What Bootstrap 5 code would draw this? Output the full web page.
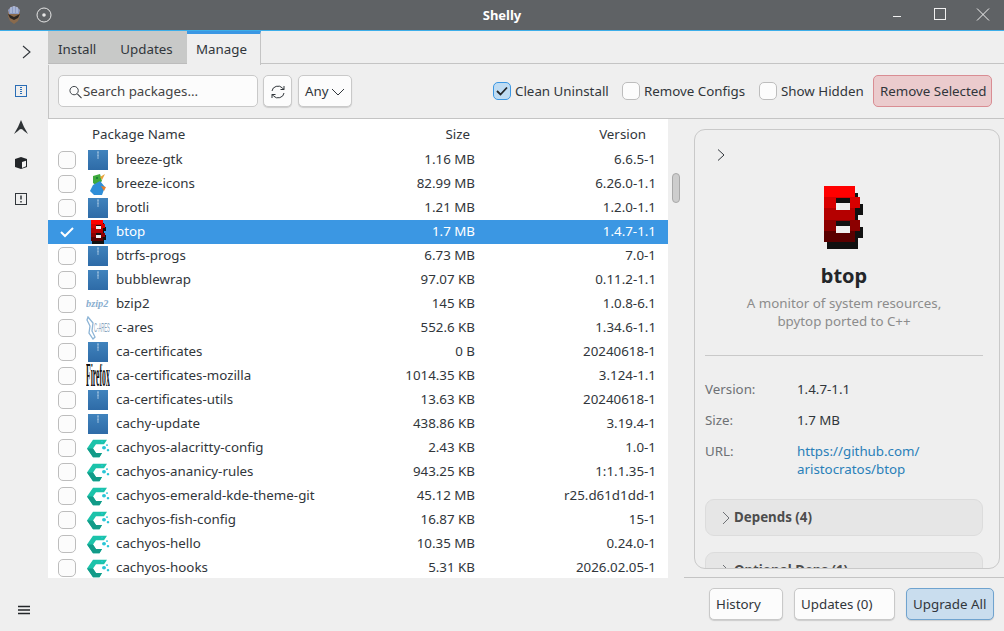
<!DOCTYPE html>
<html lang="en">
<head>
    <meta charset="UTF-8">
    <meta name="viewport" content="width=device-width, initial-scale=1.0">
    <title>Shelly</title>
    <link rel="stylesheet" href="https://cdn.jsdelivr.net/npm/bootstrap@5.3.0/dist/css/bootstrap.min.css">
    <style>
        html, body { height: 100%; overflow: hidden; }
        body { font-family: "Noto Sans", sans-serif; font-size: 13.33px; color: #31363b; background: #efefef; }
        .app-shell { width: 1004px; height: 631px; }
        .title-strip { height: 31px; background: #5f6265; border-bottom: 1px solid #3daee9; color: #fff; padding: 0 11px 0 7px; flex: none; }
        .title-text { font-weight: 700; font-size: 13px; left: 0; right: 0; top: 6px; text-align: center; }
        .title-disc { margin-left: 15px; }
        .win-btn { width: 20px; height: 20px; margin-left: 25px; }
        .win-btn + .win-btn { margin-left: 23px; }
        .main-area { height: 600px; }
        .side-rail { width: 48px; flex: none; padding-top: 11px; padding-bottom: 11px; }
        .rail-btn { width: 36px; height: 36px; margin-left: 3px; }
        .rail-chevron { margin-left: 6px; height: 20px; margin-bottom: 11px; }
        .rail-menu { margin-bottom: 5px; }
        .tab-strip { height: 34px; flex: none; }
        .tab-group { width: 139px; height: 33px; background: #c8c9c8; border-bottom: 1px solid #bcbcbc; padding: 9px 0 0 10px; gap: 24px; }
        .tab-on { width: 74px; height: 34px; border-top: 3px solid #3b97e3; border-right: 1px solid #c4c4c4; padding: 6px 0 0 9px; }
        .tab-rest { border-bottom: 1px solid #c4c4c4; height: 33px; }
        .tool-row { height: 54px; flex: none; position: relative; border-bottom: 1px solid #c4c4c4; border-left: 1px solid #c4c4c4; padding: 10px 12px 0 9px; }
        .field-box { height: 32px; background: #fcfcfc; border: 1px solid #c9c9c9; border-radius: 5px; padding-top: 1px; }
        .search-box { width: 200px; padding-left: 10px; color: #444; gap: 1px; }
        .refresh-btn { width: 29px; margin-left: 5px; box-shadow: 0 1px 1px #ccc; }
        .any-btn { width: 54px; margin-left: 6px; padding-left: 6px; gap: 2px; box-shadow: 0 1px 1px #ccc; }
        .fake-check { width: 18px; height: 18px; flex: none; background: #fcfcfc; border: 1px solid #bdbdbd; border-radius: 5px; }
        .fake-check.is-on { background: #bfdcf3; border-color: #3b97e3; }
        .opt-check { gap: 4px; position: absolute; top: 17px; }
        .opt-clean { left: 444px; }
        .opt-configs { left: 573px; }
        .opt-hidden { left: 710px; }
        .danger-btn { position: absolute; left: 824px; top: 10px; width: 119px; height: 32px; background: #ebcbcd; border: 1px solid #d98d93; border-radius: 5px; padding: 6px 0 0 6px; white-space: nowrap; }
        .split-area { height: 459px; flex: none; }
        .list-pane { width: 620px; flex: none; background: #fff; height: 459px; overflow: hidden; }
        .list-head { height: 29px; padding-top: 6px; }
        .pkg-row { height: 24px; align-items: center; }
        .pkg-row.is-sel { background: #3b97e3; color: #fff; }
        .cell-check { width: 38px; padding-left: 10px; flex: none; }
        .cell-icon { width: 30px; flex: none; padding-right: 6px; display: flex; justify-content: center; }
        .cell-name { width: 200px; flex: none; white-space: nowrap; }
        .cell-size { width: 159px; flex: none; text-align: right; }
        .cell-ver { width: 181px; flex: none; text-align: right; }
        .head-name { padding-left: 44px; width: 200px; }
        .head-size { width: 222px; text-align: right; }
        .head-ver { width: 176px; text-align: right; }
        .scroll-col { width: 26px; flex: none; padding: 54px 0 0 4px; }
        .scroll-thumb { width: 8px; height: 30px; background: #cdcdcd; border: 1px solid #a9a9a9; border-radius: 4px; }
        .detail-card { margin-top: 10px; width: 306px; height: 440px; border: 1px solid #c9c9c9; border-radius: 11px; overflow: hidden; padding: 0 16px 0 10px; }
        .detail-card > * { flex-shrink: 0; }
        .detail-chevron { height: 52px; padding: 15px 0 0 11px; }
        .detail-logo { display: block; margin: 4px auto 0; }
        .detail-name { font-size: 20px; font-weight: 700; color: #232629; line-height: 24px; margin-top: 14px; }
        .detail-desc { color: #8c8c8c; line-height: 18px; margin-top: 6px; height: 62px; border-bottom: 1px solid #c9c9c9; }
        .info-list { padding-top: 24px; line-height: 18px; }
        .info-row { height: 31px; }
        .info-url { height: 57px; }
        .info-key { width: 92px; color: #6e7175; flex: none; }
        .info-link { color: #2980b9; line-height: 18px; text-decoration: none; }
        .expander-box { height: 37px; background: #e6e6e6; border: 1px solid #dcdcdc; border-radius: 9px; margin-bottom: 16px; padding: 8px 0 0 16px; font-weight: 700; color: #4d4d4d; gap: 3px; }
        .expander-box svg { margin-top: 3px; }
        .foot-bar { height: 54px; flex: none; margin: -1px 0 0 636px; border-top: 1px solid #c4c4c4; padding: 10px 10px 0 25px; gap: 11px; }
        .foot-btn { height: 32px; background: #fcfcfc; border: 1px solid #c9c9c9; border-radius: 5px; padding: 6px 0 0 6px; box-shadow: 0 1px 1px #ccc; white-space: nowrap; }
        .foot-history { width: 74px; }
        .foot-updates { width: 101px; }
        .foot-primary { width: 88px; background: #c9ddee; border-color: #6fa3cf; }
    </style>
</head>
<body>
<svg width="0" height="0" class="position-absolute">
    <defs>
        <linearGradient id="zipFill" x1="0" y1="0" x2="0" y2="1"><stop offset="0" stop-color="#4083bd"/><stop offset="1" stop-color="#2e6ba7"/></linearGradient>
        <symbol id="zipIcon" viewBox="0 0 20 20">
            <rect x="0" y="0" width="20" height="20" fill="url(#zipFill)"/>
            <path d="M10 1v2M9 3h2M10 4v2M9 6h2M10 7v2" stroke="#9dc0de" stroke-width="1" fill="none"/>
        </symbol>
        <symbol id="cachyIcon" viewBox="0 0 24 24" preserveAspectRatio="none">
            <path d="M7 2h14l-3 5H10L7 12l3 5h6l-2.500 5H7L1 12z" fill="#1cc3aa"/>
            <path d="M1 12h6l3 5h6l-2.500 5H7z" fill="#129b88"/>
            <circle cx="18" cy="11" r="2" fill="#28c5d6"/><circle cx="22" cy="14" r="1.300" fill="#28c5d6"/><circle cx="16" cy="4" r="1" fill="#28c5d6"/><circle cx="21" cy="8" r="1" fill="#28c5d6"/>
        </symbol>
        <symbol id="btopIcon" viewBox="0 0 40 64" shape-rendering="crispEdges">
            <path d="M0 0H31V11H36V22H31V34H36V45H31V56H0z" fill="#111" transform="translate(3 7)"/>
            <rect x="0" y="0" width="31" height="11" fill="#ff0000"/>
            <rect x="0" y="11" width="36" height="11" fill="#d80000"/>
            <rect x="0" y="22" width="31" height="12" fill="#b40000"/>
            <rect x="0" y="34" width="36" height="11" fill="#8c0000"/>
            <rect x="0" y="45" width="31" height="11" fill="#5a0000"/>
            <rect x="12" y="12" width="14" height="5" fill="#111"/><rect x="12" y="17" width="14" height="7" fill="#efefef"/>
            <rect x="12" y="35" width="14" height="5" fill="#111"/><rect x="12" y="40" width="14" height="7" fill="#efefef"/>
        </symbol>
    </defs>
</svg>

<div class="app-shell d-flex flex-column">
    <!-- Title bar -->
    <div class="title-strip d-flex align-items-center position-relative">
        <svg width="14" height="18" viewBox="0 0 14 18"><path d="M1 4l3-3 3-1 3 1 3 3v6l-2 5-4 3-4-3-2-5z" fill="#8a6a4c"/><path d="M1 4l3-3 3-1 3 1 3 3-1 4H2z" fill="#8d9cc4"/><path d="M4 1v6M7 0v7M10 1v6" stroke="#dfe5f2" stroke-width=".7"/><path d="M1 8l6 3 6-3-2 4-4 2-4-2z" fill="#2c2622"/></svg>
        <svg class="title-disc" width="16" height="16" viewBox="0 0 16 16"><circle cx="8" cy="8" r="7" fill="none" stroke="#e6e6e6"/><circle cx="8" cy="8" r="1.800" fill="#e6e6e6"/></svg>
        <div class="title-text position-absolute">Shelly</div>
        <div class="ms-auto d-flex align-items-center">
            <svg class="win-btn" viewBox="0 0 20 20"><path d="M6 11.500h8" stroke="#f0f0f0" fill="none"/></svg>
            <svg class="win-btn" viewBox="0 0 20 20"><rect x="4.500" y="3.500" width="11" height="11" stroke="#f0f0f0" fill="none"/></svg>
            <svg class="win-btn" viewBox="0 0 20 20"><path d="M4 3.500l12 12M16 3.500l-12 12" stroke="#f0f0f0" fill="none"/></svg>
        </div>
    </div>

    <div class="main-area d-flex">
        <!-- Sidebar -->
        <div class="side-rail d-flex flex-column">
            <div class="rail-chevron d-flex align-items-center justify-content-center"><svg width="36" height="20" viewBox="0 0 36 20"><path d="M14 4l7 6-7 6" fill="none" stroke="#31363b" stroke-width="1.100"/></svg></div>
            <div class="rail-btn d-flex align-items-center justify-content-center"><svg width="12" height="12" viewBox="0 0 12 12"><rect x=".5" y=".5" width="11" height="11" fill="none" stroke="#2a6db5"/><path d="M5 2.500h2M5 4.500h2M5 6.500h2M5 8.500h2" stroke="#2a6db5"/></svg></div>
            <div class="rail-btn d-flex align-items-center justify-content-center"><svg width="14" height="14" viewBox="0 0 14 14"><path d="M7 0l3 7 4 7-4-3Q7 7 4 11l-4 3 4-7z" fill="#2f3336"/></svg></div>
            <div class="rail-btn d-flex align-items-center justify-content-center"><svg width="12" height="12" viewBox="0 0 12 12"><path d="M0 2l6-2 6 2v8l-6 2-6-2z" fill="#232629"/><path d="M7 5l4-1.300v5.600L7 11z" fill="#f5f5f5"/></svg></div>
            <div class="rail-btn d-flex align-items-center justify-content-center"><svg width="12" height="12" viewBox="0 0 12 12"><rect x=".5" y=".5" width="11" height="11" fill="none" stroke="#31363b"/><path d="M6 2.500v4M6 8v1.500" stroke="#31363b" stroke-width="1.500"/></svg></div>
            <div class="rail-menu mt-auto d-flex justify-content-center"><svg width="12" height="10" viewBox="0 0 12 10"><path d="M0 1.500h12M0 5h12M0 8.500h12" stroke="#232629" stroke-width="1.300"/></svg></div>
        </div>

        <div class="flex-grow-1 d-flex flex-column">
            <!-- Tabs -->
            <div class="tab-strip d-flex">
                <div class="tab-group d-flex">
                    <div>Install</div>
                    <div>Updates</div>
                </div>
                <div class="tab-on">Manage</div>
                <div class="tab-rest flex-grow-1"></div>
            </div>

            <!-- Toolbar -->
            <div class="tool-row d-flex">
                <div class="field-box search-box d-flex align-items-center">
                    <svg width="13" height="14" viewBox="0 0 14 14" class="flex-shrink-0"><circle cx="5.500" cy="5.500" r="4.500" fill="none" stroke="#31363b"/><path d="M9 9l4.500 4.500" stroke="#31363b" stroke-width="1.100"/></svg>
                    <span>Search packages...</span>
                </div>
                <div class="field-box refresh-btn d-flex align-items-center justify-content-center">
                    <svg width="14" height="14" viewBox="0 0 14 14"><path d="M1 6a6 5.500 0 0 1 10.500-3L13 4.500M13 1v3.500H9.500M13 8a6 5.500 0 0 1-10.500 3L1 9.500M1 13V9.500h3.500" fill="none" stroke="#31363b"/></svg>
                </div>
                <div class="field-box any-btn d-flex align-items-center">
                    <span>Any</span>
                    <svg width="14" height="8" viewBox="0 0 14 8"><path d="M1 1l6 6 6-6" fill="none" stroke="#31363b"/></svg>
                </div>
                <div class="opt-check opt-clean d-flex">
                    <span class="fake-check is-on d-flex align-items-center justify-content-center"><svg width="12" height="10" viewBox="0 0 12 10"><path d="M1 5l3.500 3.500L11 1.500" fill="none" stroke="#232629" stroke-width="1.800"/></svg></span>
                    <span>Clean Uninstall</span>
                </div>
                <div class="opt-check opt-configs d-flex"><span class="fake-check"></span><span>Remove Configs</span></div>
                <div class="opt-check opt-hidden d-flex"><span class="fake-check"></span><span>Show Hidden</span></div>
                <div class="danger-btn">Remove Selected</div>
            </div>

            <div class="split-area d-flex">
                <!-- Package list -->
                <div class="list-pane" id="pkgList">
                    <div class="list-head d-flex">
                        <div class="head-name">Package Name</div>
                        <div class="head-size">Size</div>
                        <div class="head-ver">Version</div>
                    </div>
                </div>
                <div class="scroll-col"><div class="scroll-thumb"></div></div>

                <!-- Detail panel -->
                <div class="detail-card d-flex flex-column">
                    <div class="detail-chevron"><svg width="10" height="12" viewBox="0 0 10 12"><path d="M2 0.500l6 5.500-6 5.500" fill="none" stroke="#31363b"/></svg></div>
                    <svg class="detail-logo" width="40" height="64"><use href="#btopIcon"/></svg>
                    <div class="detail-name text-center">btop</div>
                    <div class="detail-desc text-center">A monitor of system resources,<br>bpytop ported to C++</div>
                    <div class="info-list">
                        <div class="info-row d-flex"><div class="info-key">Version:</div><div>1.4.7-1.1</div></div>
                        <div class="info-row d-flex"><div class="info-key">Size:</div><div>1.7 MB</div></div>
                        <div class="info-url d-flex"><div class="info-key">URL:</div><a class="info-link" href="#">https://github.com/<br>aristocratos/btop</a></div>
                    </div>
                    <div class="expander-box d-flex"><svg width="9" height="14" viewBox="0 0 9 14"><path d="M1 1l6 6-6 6" fill="none" stroke="#6e7175"/></svg><span>Depends (4)</span></div>
                    <div class="expander-box d-flex"><svg width="9" height="14" viewBox="0 0 9 14"><path d="M1 1l6 6-6 6" fill="none" stroke="#6e7175"/></svg><span>Optional Deps (1)</span></div>
                </div>
            </div>

            <!-- Bottom buttons -->
            <div class="foot-bar d-flex">
                <div class="foot-btn foot-history">History</div>
                <div class="foot-btn foot-updates">Updates (0)</div>
                <div class="foot-btn foot-primary">Upgrade All</div>
            </div>
        </div>
    </div>
</div>

<script>
    // package rows: [name, size, version, icon]
    const pkgs = [
        ['breeze-gtk', '1.16 MB', '6.6.5-1', 'zip'],
        ['breeze-icons', '82.99 MB', '6.26.0-1.1', 'bird'],
        ['brotli', '1.21 MB', '1.2.0-1.1', 'zip'],
        ['btop', '1.7 MB', '1.4.7-1.1', 'btop'],
        ['btrfs-progs', '6.73 MB', '7.0-1', 'zip'],
        ['bubblewrap', '97.07 KB', '0.11.2-1.1', 'zip'],
        ['bzip2', '145 KB', '1.0.8-6.1', 'bzip'],
        ['c-ares', '552.6 KB', '1.34.6-1.1', 'cares'],
        ['ca-certificates', '0 B', '20240618-1', 'zip'],
        ['ca-certificates-mozilla', '1014.35 KB', '3.124-1.1', 'firefox'],
        ['ca-certificates-utils', '13.63 KB', '20240618-1', 'zip'],
        ['cachy-update', '438.86 KB', '3.19.4-1', 'zip'],
        ['cachyos-alacritty-config', '2.43 KB', '1.0-1', 'cachy'],
        ['cachyos-ananicy-rules', '943.25 KB', '1:1.1.35-1', 'cachy'],
        ['cachyos-emerald-kde-theme-git', '45.12 MB', 'r25.d61d1dd-1', 'cachy'],
        ['cachyos-fish-config', '16.87 KB', '15-1', 'cachy'],
        ['cachyos-hello', '10.35 MB', '0.24.0-1', 'cachy'],
        ['cachyos-hooks', '5.31 KB', '2026.02.05-1', 'cachy']
    ];
    const icons = {
        zip: '<svg width="20" height="20"><use href="#zipIcon"/></svg>',
        cachy: '<svg width="24" height="21"><use href="#cachyIcon" width="24" height="21"/></svg>',
        btop: '<svg width="15" height="24"><use href="#btopIcon"/></svg>',
        bird: '<svg width="16" height="21" viewBox="0 0 16 21"><path d="M3 2l7-2 2 7-5 5-4-3z" fill="#3faa3c"/><path d="M3 11l7-4 5 6-3 8H4l-4-4z" fill="#2f8ed8"/><path d="M10 3l5-3-3 6z" fill="#e8a33a"/><path d="M11 12l5 1-2 4z" fill="#e87d2a"/><circle cx="7" cy="4" r="1" fill="#173"/></svg>',
        bzip: '<svg width="24" height="14" viewBox="0 0 24 14"><text transform="translate(0 10) scale(1.03 1)" font-family="Liberation Serif" font-style="italic" font-weight="700" font-size="10" fill="#89aecf">bzip2</text></svg>',
        cares: '<svg width="24" height="24" viewBox="0 0 24 24"><path d="M2 1l5 6-1 8 3 6-2 2-4-6 1-7-3-6z" fill="none" stroke="#8cb4d6" stroke-width="1.300"/><text transform="translate(8 16) scale(.42 1.300)" font-family="Liberation Sans" font-size="10" fill="#8aa6bf">C-ARES</text></svg>',
        firefox: '<svg width="24" height="24" viewBox="0 0 24 24"><text transform="translate(0 22) scale(.32 1.400)" font-family="Liberation Serif" font-weight="700" font-size="24" fill="#111">Firefox</text></svg>'
    };
    const check = '<span class="fake-check d-block"></span>';
    const tick = '<svg width="18" height="14" viewBox="0 0 18 14" class="d-block"><path d="M3 7l4 4 8-8" fill="none" stroke="#fff" stroke-width="2"/></svg>';
    document.getElementById('pkgList').insertAdjacentHTML('beforeend', pkgs.map(p =>
        `<div class="pkg-row d-flex ${p[0] === 'btop' ? 'is-sel' : ''}">
            <div class="cell-check">${p[0] === 'btop' ? tick : check}</div>
            <div class="cell-icon">${icons[p[3]]}</div>
            <div class="cell-name">${p[0]}</div>
            <div class="cell-size">${p[1]}</div>
            <div class="cell-ver">${p[2]}</div>
        </div>`).join(''));
</script>
<script src="https://cdn.jsdelivr.net/npm/bootstrap@5.3.0/dist/js/bootstrap.bundle.min.js"></script>
</body>
</html>
